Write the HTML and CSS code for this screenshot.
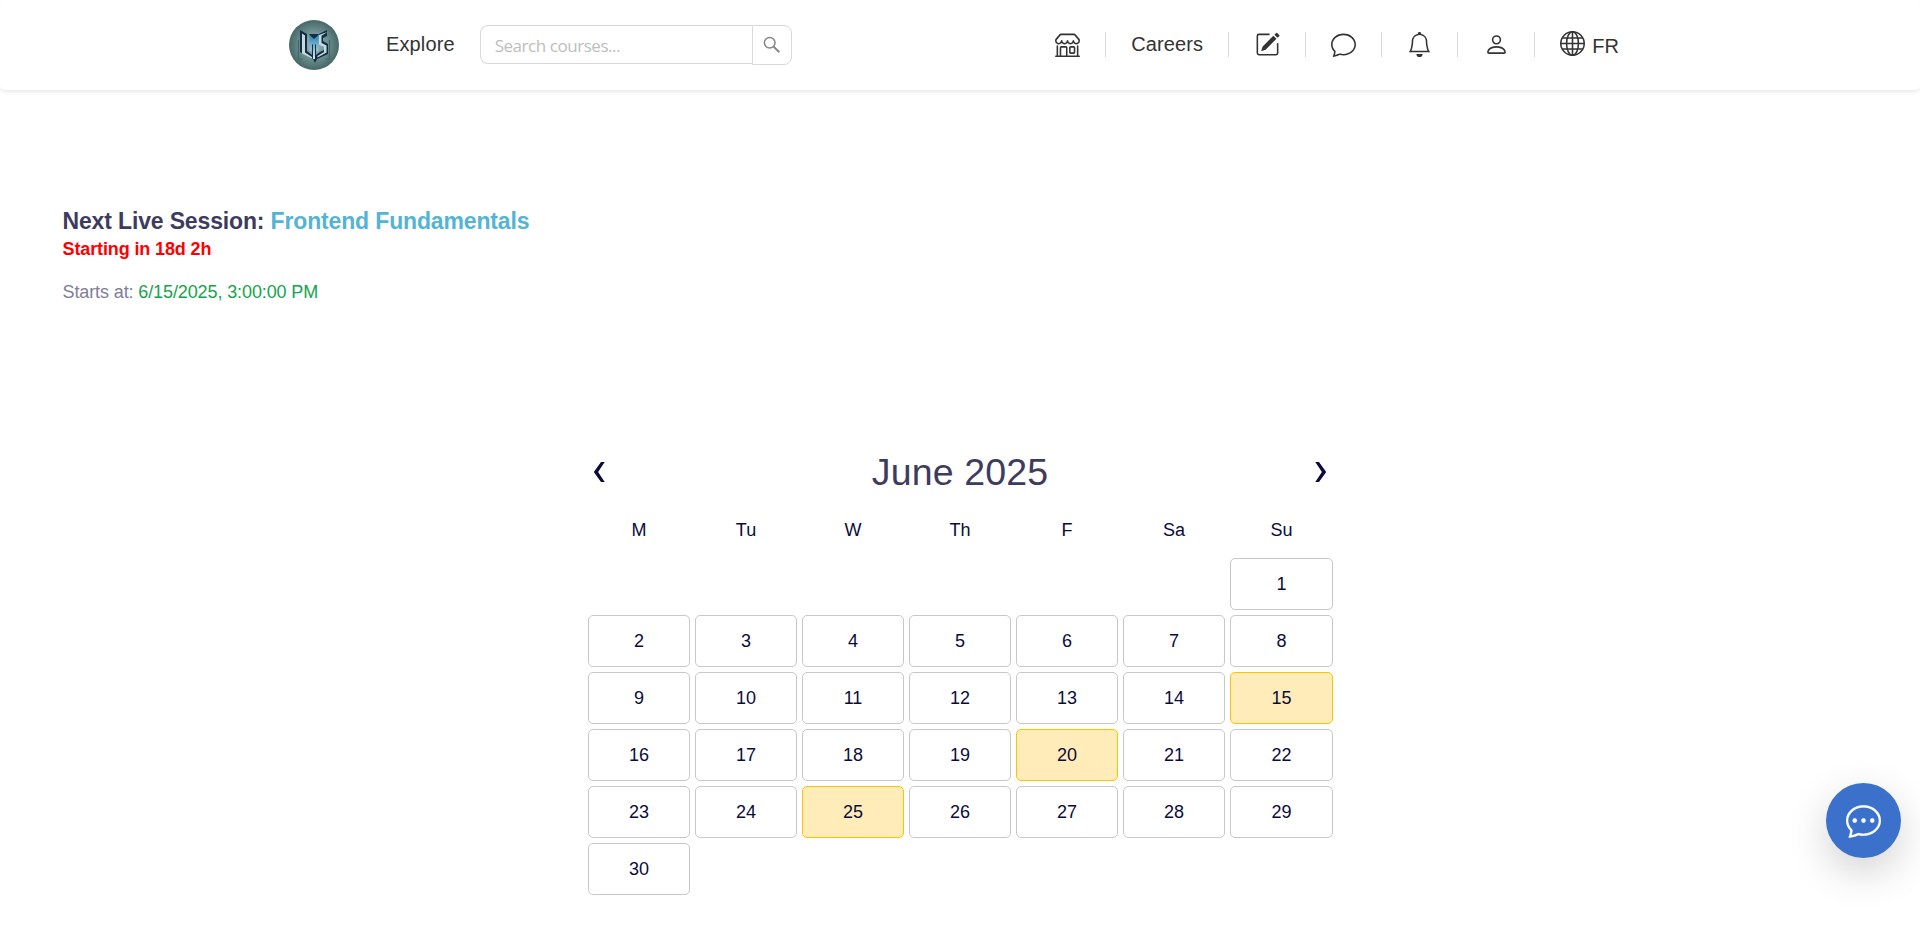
FILE: index.html
```html
<!DOCTYPE html>
<html lang="en">
<head>
<meta charset="utf-8">
<title>Live Sessions</title>
<link rel="stylesheet" href="styles.css">
</head>
<body>
<header class="header">
  <div class="left">
    <svg class="logo" viewBox="0 0 50 50">
      <defs>
        <radialGradient id="disc"><stop offset="0" stop-color="#9dbab9"/><stop offset=".55" stop-color="#6d9090"/><stop offset="1" stop-color="#466867"/></radialGradient>
        <linearGradient id="blade" x1="0" y1="0" x2="0" y2="1"><stop offset="0" stop-color="#2585b5"/><stop offset="1" stop-color="#dcecf2"/></linearGradient>
      </defs>
      <circle cx="25" cy="25" r="25" fill="url(#disc)"/>
      <path d="M9.500 20v19h4M40.500 20v19h-4" fill="none" stroke="#45646b" stroke-width="1.200"/>
      <path d="M11 10l7 4v17l5 4V18l-3-4h10l-3 4v17l4-3 4-2v-4l-5-3v-9l8-4v6l-4 2v3l5 3v10l-11 5-2 4-2-4-13-7z" fill="#142c45"/>
      <path d="M13 13.500l3 2v17l7 4.500v1.500L13 33.500zM38.500 12l-6 3.700V23l5 2.500v7l-9 5V36l6.500-4v-5l-5-2.500V15z" fill="#c6d9df"/>
      <path d="M20.500 31V15l4.500 4 4.500-4v16h-2v-8L26 25v14h-2V25l-1.500-2v8z" fill="url(#blade)"/>
    </svg>
    <a class="explore">Explore</a>
    <div class="search">
      <input class="search-input" type="text" placeholder="Search courses...">
      <button class="search-button">
        <svg width="18" height="18" viewBox="0 0 18 18" fill="none" stroke="#858585"><circle cx="6.700" cy="6.700" r="5.300" stroke-width="1.500"/><path d="M10.600 10.600l5.700 5.700" stroke-width="2"/></svg>
      </button>
    </div>
  </div>
  <nav class="nav">
    <a class="item"><svg class="icon" viewBox="0 0 16 16"><path d="M2.970 1.350A1 1 0 0 1 3.730 1h8.540a1 1 0 0 1 .76.35l2.609 3.044A1.500 1.500 0 0 1 16 5.370v.255a2.375 2.375 0 0 1-4.250 1.458A2.370 2.370 0 0 1 9.875 8 2.370 2.370 0 0 1 8 7.083 2.370 2.370 0 0 1 6.125 8a2.370 2.370 0 0 1-1.875-.917A2.375 2.375 0 0 1 0 5.625V5.370a1.500 1.500 0 0 1 .361-.976zm1.780 4.275a1.375 1.375 0 0 0 2.750 0 .5.5 0 0 1 1 0 1.375 1.375 0 0 0 2.750 0 .5.5 0 0 1 1 0 1.375 1.375 0 1 0 2.750 0V5.370a.5.5 0 0 0-.12-.325L12.270 2H3.730L1.120 5.045A.5.5 0 0 0 1 5.370v.255a1.375 1.375 0 0 0 2.750 0 .5.5 0 0 1 1 0M1.500 8.500A.5.5 0 0 1 2 9v6h1v-5a1 1 0 0 1 1-1h3a1 1 0 0 1 1 1v5h6V9a.5.5 0 0 1 1 0v6h.5a.5.5 0 0 1 0 1H.5a.5.5 0 0 1 0-1H1V9a.5.5 0 0 1 .5-.5M4 15h3v-5H4zm5-5a1 1 0 0 1 1-1h2a1 1 0 0 1 1 1v3a1 1 0 0 1-1 1h-2a1 1 0 0 1-1-1zm3 0h-2v3h2z"/></svg></a>
    <a class="item">Careers</a>
    <a class="item"><svg class="icon" viewBox="0 0 16 16"><path d="M15.502 1.940a.5.5 0 0 1 0 .706L14.459 3.690l-2-2L13.502.646a.5.5 0 0 1 .707 0l1.293 1.293zm-1.750 2.456-2-2L4.939 9.210a.5.5 0 0 0-.121.196l-.805 2.414a.25.25 0 0 0 .316.316l2.414-.805a.5.5 0 0 0 .196-.12l6.813-6.814z"/><path d="M1 13.500A1.500 1.500 0 0 0 2.500 15h11a1.500 1.500 0 0 0 1.500-1.500v-6a.5.5 0 0 0-1 0v6a.5.5 0 0 1-.5.5h-11a.5.5 0 0 1-.5-.5v-11a.5.5 0 0 1 .5-.5H9a.5.5 0 0 0 0-1H2.500A1.500 1.500 0 0 0 1 2.500z"/></svg></a>
    <a class="item"><svg class="icon" viewBox="0 0 16 16"><path d="M2.678 11.894a1 1 0 0 1 .287.801 11 11 0 0 1-.398 2c1.395-.323 2.247-.697 2.634-.893a1 1 0 0 1 .71-.074A8 8 0 0 0 8 14c3.996 0 7-2.807 7-6s-3.004-6-7-6-7 2.808-7 6c0 1.468.617 2.830 1.678 3.894m-.493 3.905a22 22 0 0 1-.713.129c-.2.032-.352-.176-.273-.362a10 10 0 0 0 .244-.637l.003-.01c.248-.72.45-1.548.524-2.319C.743 11.370 0 9.760 0 8c0-3.866 3.582-7 8-7s8 3.134 8 7-3.582 7-8 7a9 9 0 0 1-2.347-.306c-.52.263-1.639.742-3.468 1.105"/></svg></a>
    <a class="item"><svg class="icon" viewBox="0 0 16 16"><path d="M8 16a2 2 0 0 0 2-2H6a2 2 0 0 0 2 2M8 1.918l-.797.161A4 4 0 0 0 4 6c0 .628-.134 2.197-.459 3.742-.16.767-.376 1.566-.663 2.258h10.244c-.287-.692-.502-1.490-.663-2.258C12.134 8.197 12 6.628 12 6a4 4 0 0 0-3.203-3.920zM14.220 12c.223.447.481.801.78 1H1c.299-.199.557-.553.78-1C2.680 10.200 3 6.880 3 6c0-2.420 1.720-4.440 4.005-4.901a1 1 0 1 1 1.990 0A5 5 0 0 1 13 6c0 .88.32 4.200 1.220 6"/></svg></a>
    <a class="item"><svg class="icon" viewBox="0 0 16 16"><path d="M8 8a3 3 0 1 0 0-6 3 3 0 0 0 0 6m2-3a2 2 0 1 1-4 0 2 2 0 0 1 4 0m4 8c0 1-1 1-1 1H3s-1 0-1-1 1-4 6-4 6 3 6 4m-1-.004c-.001-.246-.154-.986-.832-1.664C11.516 10.680 10.289 10 8 10s-3.516.68-4.168 1.332c-.678.678-.83 1.418-.832 1.664z"/></svg></a>
    <a class="item lang"><svg class="icon globe" viewBox="0 0 16 16"><circle cx="8" cy="8" r="7.500"/><ellipse cx="8" cy="8" rx="3.800" ry="7.500"/><path d="M8 .5v15M.5 8h15M1.500 4.500h13M1.500 11.500h13"/></svg><span class="lang-code">FR</span></a>
  </nav>
</header>
<main>
  <section class="session">
    <h2 class="session-title">Next Live Session: <span class="course">Frontend Fundamentals</span></h2>
    <p class="countdown">Starting in 18d 2h</p>
    <p class="starts">Starts at: <span class="date">6/15/2025, 3:00:00 PM</span></p>
  </section>
  <section class="calendar">
    <div class="month-bar">
      <svg class="arrow" viewBox="0 0 12 20"><path d="M8 0h3.700L5.100 10l6.600 10H8L.8 10z"/></svg>
      <h1 class="month">June 2025</h1>
      <svg class="arrow" viewBox="0 0 12 20"><path d="M4 0H.3l6.600 10L.3 20H4l7.200-10z"/></svg>
    </div>
    <div class="weekdays"><span>M</span><span>Tu</span><span>W</span><span>Th</span><span>F</span><span>Sa</span><span>Su</span></div>
    <div class="days">
      <div class="day first">1</div>
      <div class="day">2</div><div class="day">3</div><div class="day">4</div><div class="day">5</div><div class="day">6</div><div class="day">7</div><div class="day">8</div>
      <div class="day">9</div><div class="day">10</div><div class="day">11</div><div class="day">12</div><div class="day">13</div><div class="day">14</div><div class="day event">15</div>
      <div class="day">16</div><div class="day">17</div><div class="day">18</div><div class="day">19</div><div class="day event">20</div><div class="day">21</div><div class="day">22</div>
      <div class="day">23</div><div class="day">24</div><div class="day event">25</div><div class="day">26</div><div class="day">27</div><div class="day">28</div><div class="day">29</div>
      <div class="day">30</div>
    </div>
  </section>
</main>
<button class="chat-fab"><svg width="35" height="35" viewBox="0 0 16 16" fill="#fff" stroke="#fff" stroke-width=".1"><path d="M5 8a1 1 0 1 1-2 0 1 1 0 0 1 2 0m4 0a1 1 0 1 1-2 0 1 1 0 0 1 2 0m3 1a1 1 0 1 0 0-2 1 1 0 0 0 0 2"/><path d="M2.678 11.894a1 1 0 0 1 .287.801 11 11 0 0 1-.398 2c1.395-.323 2.247-.697 2.634-.893a1 1 0 0 1 .71-.074A8 8 0 0 0 8 14c3.996 0 7-2.807 7-6s-3.004-6-7-6-7 2.808-7 6c0 1.468.617 2.830 1.678 3.894m-.493 3.905a22 22 0 0 1-.713.129c-.2.032-.352-.176-.273-.362a10 10 0 0 0 .244-.637l.003-.01c.248-.72.45-1.548.524-2.319C.743 11.370 0 9.760 0 8c0-3.866 3.582-7 8-7s8 3.134 8 7-3.582 7-8 7a9 9 0 0 1-2.347-.306c-.52.263-1.639.742-3.468 1.105"/></svg></button>
</body>
</html>
```
FILE: styles.css
```css
* { box-sizing: border-box; }
body {
  margin: 0;
  height: 928px;
  overflow: hidden;
  background: #fff;
  color: #0b0b3b;
  font: 18px/27px "Liberation Sans", Arial, sans-serif;
}
h1, h2, p { margin: 0; }

.header {
  display: flex;
  justify-content: space-between;
  height: 90px;
  padding: 0 276px 0 289px;
  border-radius: 5px;
  box-shadow: 0 2px 4px rgba(0, 0, 0, .09);
  color: #333;
  font-size: 20px;
}
.left { display: flex; align-items: center; }
.logo { width: 50px; height: 50px; }
.explore { margin: 0 25px 3px 47px; line-height: 30px; letter-spacing: .12px; }
.search { display: flex; align-items: flex-start; height: 40px; }
.search-input {
  width: 272px;
  height: 39px;
  padding: 2px 14px 1px;
  border: 1px solid #d9d9d9;
  border-right: 0;
  border-radius: 8px 0 0 8px;
  outline: 0;
  font: 17px "Open Sans", sans-serif;
  letter-spacing: -.45px;
}
.search-input::placeholder { color: #bdbdbd; }
.search-button {
  display: flex;
  align-items: center;
  justify-content: center;
  width: 40px;
  height: 40px;
  padding: 0;
  border: 1px solid #d9d9d9;
  border-radius: 0 8px 8px 0;
  background: #fff;
}

.nav { display: flex; align-items: center; padding-bottom: 1px; letter-spacing: .1px; }
.item {
  display: flex;
  align-items: center;
  height: 25px;
  padding: 0 25px 0 25.4px;
  border-right: 1px solid #d9d9d9;
}
.item:last-child { border-right: 0; }
.icon { width: 25px; height: 25px; margin-top: -1px; fill: currentColor; }
.globe { margin-top: -2px; fill: none; stroke: currentColor; stroke-width: 1; }
.lang { gap: 7px; }
.lang-code { margin-top: 3px; }

.session { padding: 116px 62.500px 0; height: 355px; }
.session-title { font-size: 23px; line-height: 30px; letter-spacing: -.15px; color: #3e3c5e; }
.course { color: #54b4d3; }
.countdown { line-height: 27px; letter-spacing: -.12px; font-weight: 700; color: #f00; }
.starts { margin-top: 16px; letter-spacing: -.11px; color: #7e7e9a; }
.date { color: #14a44d; }

.calendar { width: 745px; margin: 0 auto 0 588px; }
.month-bar {
  display: flex;
  align-items: center;
  justify-content: space-between;
  height: 54px;
  padding: 0 6px 0 5px;
}
.arrow { width: 12px; height: 20px; fill: #0b0b3b; }
.month { font-size: 37.500px; font-weight: 400; line-height: 54px; letter-spacing: .15px; color: #3e3c5e; }
.weekdays, .days {
  display: grid;
  grid-template-columns: repeat(6, 102px) 103px;
  column-gap: 5px;
  text-align: center;
}
.weekdays { margin-top: 17px; height: 42px; line-height: 28px; }
.days { row-gap: 5px; }
.day {
  height: 52px;
  border: 1px solid #c8c8c8;
  border-radius: 5px;
  line-height: 50px;
}
.first { grid-column: 7; }
.event { background: #ffecb8; border-color: #ffc107; }

.chat-fab {
  position: fixed;
  right: 19px;
  bottom: 70px;
  display: flex;
  align-items: center;
  justify-content: center;
  width: 75px;
  height: 75px;
  padding: 0;
  border: 0;
  border-radius: 50%;
  background: #3b71ca;
  box-shadow: 0 14px 40px rgba(0, 0, 0, .18);
}
```
